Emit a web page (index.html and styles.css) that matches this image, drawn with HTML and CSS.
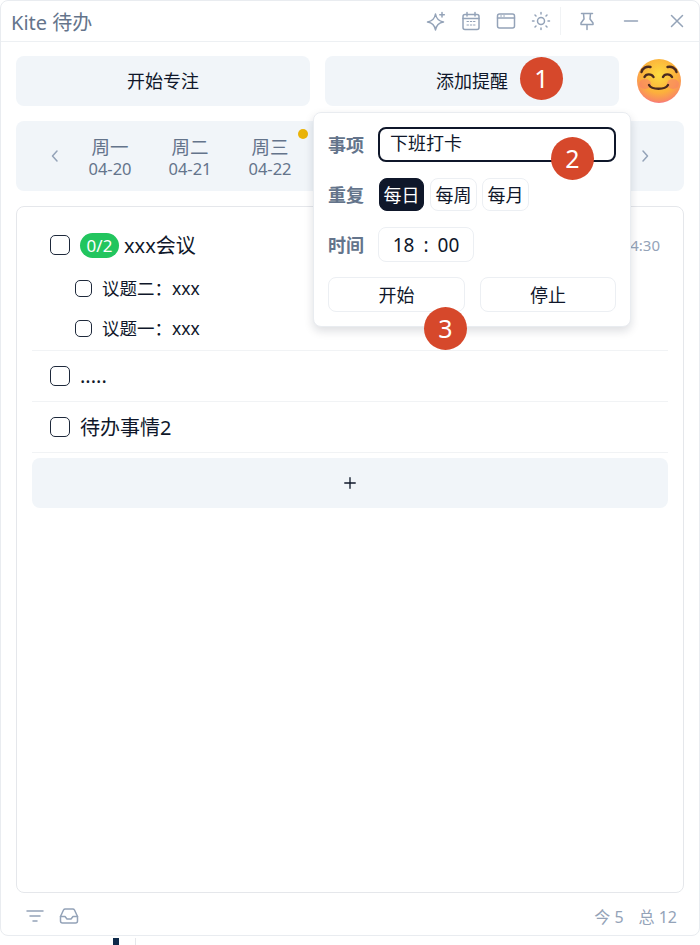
FILE: index.html
```html
<!DOCTYPE html>
<html lang="zh-CN">
<head>
    <meta charset="UTF-8">
    <meta name="viewport" content="width=device-width, initial-scale=1.0">
    <title>Kite 待办</title>
    <link rel="stylesheet" href="styles.css">
</head>
<body>
    <div class="window">
        <header class="titlebar">
            <div class="app-title">Kite 待办</div>
            <div class="tools">
                <button class="tool">
                    <svg viewBox="0 0 20 20"><path d="M9.500 3c.8 4.800 3.200 7.200 8 8-4.800.8-7.200 3.200-8 8-.8-4.800-3.200-7.200-8-8 4.800-.8 7.200-3.200 8-8z"/><path d="M16 1.500v4.500M13.800 3.800h4.500"/></svg>
                </button>
                <button class="tool">
                    <svg viewBox="0 0 20 20"><rect x="2" y="3.500" width="16" height="15" rx="2"/><path d="M2 7.500h16M6 1.500v3.500M14 1.500v3.500"/><path class="fine" d="M6 10.500h1.500M9.300 10.500h1.500M12.500 10.500H14M6 14h1.500M9.300 14h1.500M12.500 14H14"/></svg>
                </button>
                <button class="tool">
                    <svg viewBox="0 0 20 20"><rect x="1.500" y="3" width="17" height="14" rx="2"/><path d="M1.500 7h17M5 5h.1M8 5h.1"/></svg>
                </button>
                <button class="tool">
                    <svg viewBox="0 0 20 20"><circle cx="10" cy="10" r="3.500"/><path d="M10 1.500v1.500M10 17v1.500M1.500 10H3M17 10h1.500M4 4l1 1M15 15l1 1M4 16l1-1M15 5l1-1"/></svg>
                </button>
            </div>
            <div class="tool-sep"></div>
            <button class="win-btn pin-btn">
                <svg viewBox="0 0 20 20"><path d="M4.500 2.500h11M6.500 2.500L7 8l-3 4v1.500h12V12l-3-4 .5-5.500M10 13.500v5"/></svg>
            </button>
            <button class="win-btn">
                <svg viewBox="0 0 20 20"><path d="M3.500 10h13"/></svg>
            </button>
            <button class="win-btn close-btn">
                <svg viewBox="0 0 20 20"><path d="M4.500 4.500l11 11M15.500 4.500l-11 11"/></svg>
            </button>
        </header>

        <main class="content">
            <div class="actions">
                <button class="action-btn">开始专注</button>
                <button class="action-btn">添加提醒</button>
                <svg class="avatar" viewBox="0 0 44 44">
                    <defs>
                        <radialGradient id="face" cx="50%" cy="36%" r="66%">
                            <stop offset="0%" stop-color="#fddc3f"/>
                            <stop offset="62%" stop-color="#fcb03c"/>
                            <stop offset="90%" stop-color="#f98a62"/>
                            <stop offset="100%" stop-color="#f56f8c"/>
                        </radialGradient>
                    </defs>
                    <circle cx="22" cy="22" r="22" fill="url(#face)"/>
                    <ellipse cx="8" cy="25" rx="6" ry="5" fill="#f9806a" opacity=".6"/>
                    <ellipse cx="36" cy="25" rx="6" ry="5" fill="#f9806a" opacity=".6"/>
                    <g fill="none" stroke="#4a2a20" stroke-width="2.400" stroke-linecap="round">
                        <path d="M4.500 13c1-4 5-6 9-5"/>
                        <path d="M39.500 13c-1-4-5-6-9-5"/>
                        <path d="M7.500 18c1.500-3.500 7-3.500 9 0"/>
                        <path d="M26 18c1.500-3.500 7-3.500 9 0"/>
                        <path d="M12 26c3 5 16 5 19 0"/>
                    </g>
                </svg>
                <span class="step step-one">1</span>

                <div class="popover">
                    <div class="form-row">
                        <label class="form-label">事项</label>
                        <div class="text-input">下班打卡</div>
                    </div>
                    <div class="form-row">
                        <label class="form-label">重复</label>
                        <div class="repeat-group">
                            <button class="chip active">每日</button>
                            <button class="chip">每周</button>
                            <button class="chip">每月</button>
                        </div>
                    </div>
                    <div class="form-row time-row">
                        <label class="form-label">时间</label>
                        <div class="time-input"><span>18</span><span>:</span><span>00</span></div>
                    </div>
                    <div class="form-buttons">
                        <button class="plain-btn">开始</button>
                        <button class="plain-btn">停止</button>
                    </div>
                    <span class="step step-two">2</span>
                    <span class="step step-three">3</span>
                </div>
            </div>

            <div class="week">
                <svg class="chevron" viewBox="0 0 12 16"><path d="M8 3L3.500 8 8 13"/></svg>
                <div class="days">
                    <div class="day"><span class="day-name">周一</span><span class="day-date">04-20</span></div>
                    <div class="day"><span class="day-name">周二</span><span class="day-date">04-21</span></div>
                    <div class="day"><span class="day-name">周三</span><span class="day-date">04-22</span></div>
                    <div class="day"><span class="dot"></span></div>
                </div>
                <svg class="chevron" viewBox="0 0 12 16"><path d="M4 3l4.500 5L4 13"/></svg>
            </div>

            <section class="list">
                <div class="todo">
                    <div class="todo-main">
                        <span class="check"></span>
                        <span class="badge">0/2</span>
                        <span class="todo-text">xxx会议</span>
                        <span class="todo-time">14:30</span>
                    </div>
                    <div class="sub-item"><span class="check small"></span><span>议题二：xxx</span></div>
                    <div class="sub-item"><span class="check small"></span><span>议题一：xxx</span></div>
                </div>
                <div class="todo">
                    <div class="todo-main"><span class="check"></span><span class="todo-text">.....</span></div>
                </div>
                <div class="todo">
                    <div class="todo-main"><span class="check"></span><span class="todo-text">待办事情2</span></div>
                </div>
                <button class="add-btn">
                    <svg viewBox="0 0 16 16"><path d="M8 2v12M2 8h12"/></svg>
                </button>
            </section>
        </main>

        <footer class="statusbar">
            <div class="status-icons">
                <svg viewBox="0 0 20 20"><path d="M2 5h16M5 10h10M8 15h4"/></svg>
                <svg viewBox="0 0 20 20"><path d="M1.500 10.500V15a2 2 0 0 0 2 2h13a2 2 0 0 0 2-2v-4.500L15.500 4a2 2 0 0 0-1.800-1H6.300a2 2 0 0 0-1.800 1z"/><path d="M1.500 10.500h4.500l2 2.500h4l2-2.500h4.500"/></svg>
            </div>
            <div class="counts"><span>今 5</span><span>总 12</span></div>
        </footer>
    </div>
    <div class="leftover"><span class="mark-dark"></span><span class="mark-line"></span></div>
</body>
</html>
```

FILE: styles.css
```css
* {
    box-sizing: border-box;
}

body {
    margin: 0;
    background-color: #fff;
    color: #0f172a;
    font-family: "Noto Sans", "Noto Sans CJK SC", sans-serif;
    overflow: hidden;
}

button {
    font: inherit;
    color: inherit;
    border: 0;
    background: none;
    padding: 0;
}

svg {
    display: block;
    fill: none;
    stroke-linecap: round;
    stroke-linejoin: round;
}

.window {
    width: 700px;
    height: 936px;
    display: flex;
    flex-direction: column;
    border: 1px solid #e9ecf0;
    border-radius: 8px;
    overflow: hidden;
}

/* title bar */
.titlebar {
    height: 41px;
    flex: none;
    display: flex;
    align-items: center;
    padding-left: 10px;
    border-bottom: 1px solid #edf0f3;
}

.app-title {
    font-size: 20px;
    color: #64748b;
    margin-right: auto;
}

.tools {
    display: flex;
}

.tool {
    width: 35px;
    height: 40px;
    display: flex;
    align-items: center;
    justify-content: center;
}

.tool svg {
    width: 20px;
    height: 20px;
    stroke: #94a3b8;
    stroke-width: 1.5;
}

.tool svg .fine {
    stroke-width: 1;
}

.tool-sep {
    width: 1px;
    height: 28px;
    background-color: #f1f3f5;
    margin: 0 3px 0 2px;
}

.win-btn {
    width: 46px;
    height: 40px;
    flex: none;
    display: flex;
    align-items: center;
    justify-content: center;
}

.pin-btn {
    margin-right: -2px;
}

.close-btn {
    margin-right: -1px;
}

.win-btn svg {
    width: 20px;
    height: 20px;
    stroke: #94a3b8;
    stroke-width: 1.5;
}

/* main area */
.content {
    flex: 1;
    min-height: 0;
    display: flex;
    flex-direction: column;
    padding: 14px 15px 0;
}

.actions {
    position: relative;
    display: flex;
    height: 50px;
    flex: none;
}

.action-btn {
    width: 294px;
    margin-right: 15px;
    padding-bottom: 2px;
    border-radius: 8px;
    background-color: #f1f5f9;
    font-size: 18px;
}

.action-btn + .action-btn {
    margin-right: 18px;
}

.avatar {
    width: 44px;
    height: 44px;
    margin-top: 3px;
}

.step {
    position: absolute;
    width: 43px;
    height: 43px;
    border-radius: 50%;
    background-color: #d6482b;
    color: #fff;
    font-size: 25px;
    line-height: 43px;
    text-align: center;
    z-index: 3;
}

.step-one {
    left: 504px;
    top: 1px;
}

.step-two {
    left: 237px;
    top: 24px;
}

.step-three {
    left: 110px;
    top: 194px;
}

/* reminder popover */
.popover {
    position: absolute;
    left: 297px;
    top: 56px;
    width: 318px;
    height: 215px;
    padding: 14px;
    display: flex;
    flex-direction: column;
    background-color: #fff;
    border: 1px solid #e9ecf0;
    border-radius: 8px;
    box-shadow: 0 4px 10px rgba(15, 23, 42, 0.14);
    z-index: 2;
}

.form-row {
    display: flex;
    align-items: center;
    margin-bottom: 16px;
}

.time-row {
    margin-bottom: 15px;
}

.form-label {
    width: 50px;
    flex: none;
    padding-bottom: 2px;
    font-size: 18px;
    font-weight: 700;
    color: #64748b;
}

.text-input {
    width: 238px;
    height: 35px;
    padding-left: 10px;
    border: 2px solid #0f172a;
    border-radius: 8px;
    font-size: 18px;
    line-height: 28px;
}

.repeat-group {
    display: flex;
    gap: 5px;
}

.chip {
    height: 33px;
    width: 47px;
    padding-bottom: 2px;
    border: 1px solid #eceff3;
    border-radius: 8px;
    font-size: 18px;
}

.chip.active {
    width: 45px;
    margin: 0 1px;
    background-color: #0f172a;
    border-color: #0f172a;
    color: #fff;
}

.time-input {
    width: 96px;
    height: 35px;
    display: flex;
    align-items: center;
    justify-content: center;
    gap: 9px;
    border: 1px solid #eceff3;
    border-radius: 8px;
    font-size: 19px;
}

.form-buttons {
    display: flex;
    justify-content: space-between;
}

.plain-btn {
    width: 137px;
    height: 35px;
    padding-bottom: 2px;
    border: 1px solid #eceff3;
    border-radius: 8px;
    font-size: 18px;
}

.plain-btn + .plain-btn {
    width: 136px;
}

/* week strip */
.week {
    flex: none;
    height: 70px;
    margin-top: 15px;
    display: flex;
    align-items: center;
    padding: 0 33px;
    background-color: #f1f5f9;
    border-radius: 8px;
}

.chevron {
    width: 12px;
    height: 16px;
    flex: none;
    stroke: #94a3b8;
    stroke-width: 1.5;
}

.days {
    flex: 1;
    display: flex;
    padding-left: 9px;
}

.day {
    position: relative;
    width: 80px;
    display: flex;
    flex-direction: column;
    align-items: center;
    color: #64748b;
}

.day-name {
    font-size: 18.5px;
    line-height: 25px;
}

.day-date {
    font-size: 16.5px;
    line-height: 20px;
}

.dot {
    position: absolute;
    left: -12px;
    top: -5px;
    width: 10px;
    height: 10px;
    border-radius: 50%;
    background-color: #eab308;
}

/* todo list */
.list {
    flex: 1;
    min-height: 0;
    margin-top: 15px;
    padding: 0 15px;
    border: 1px solid #e5e7eb;
    border-radius: 8px;
}

.todo {
    padding: 0 18px;
    border-bottom: 1px solid #f1f3f5;
}

.todo:first-child {
    padding-top: 13px;
    padding-bottom: 2px;
}

.todo-main {
    height: 50px;
    display: flex;
    align-items: center;
}

.check {
    flex: none;
    width: 20px;
    height: 20px;
    margin-right: 10px;
    border: 1.5px solid #1e293b;
    border-radius: 5px;
}

.check.small {
    width: 17px;
    height: 17px;
}

.badge {
    width: 39px;
    height: 25px;
    margin-right: 5px;
    border-radius: 13px;
    background-color: #22c55e;
    color: #fff;
    font-size: 17px;
    line-height: 25px;
    text-align: center;
}

.todo-text {
    padding-bottom: 2px;
    font-size: 20px;
}

.todo-time {
    margin-left: auto;
    margin-right: -10px;
    font-size: 15px;
    color: #94a3b8;
}

.sub-item {
    height: 40px;
    display: flex;
    align-items: center;
    padding-left: 25px;
    font-size: 17.5px;
}

.todo-main + .sub-item {
    margin-top: -2px;
}

.sub-item span:last-child {
    padding-bottom: 2px;
}

.add-btn {
    width: 100%;
    height: 50px;
    margin-top: 5px;
    display: flex;
    align-items: center;
    justify-content: center;
    border-radius: 8px;
    background-color: #f1f5f9;
}

.add-btn svg {
    width: 14px;
    height: 14px;
    stroke: #0f172a;
    stroke-width: 1.5;
}

/* status bar */
.statusbar {
    flex: none;
    height: 42px;
    display: flex;
    align-items: center;
    justify-content: space-between;
    padding: 3px 22px 0 24px;
    font-size: 16px;
    color: #94a3b8;
}

.status-icons {
    display: flex;
    gap: 14px;
}

.status-icons svg {
    width: 20px;
    height: 20px;
    stroke: #94a3b8;
    stroke-width: 1.5;
}

.counts {
    display: flex;
    gap: 15px;
}

/* bits of another window showing under this one */
.leftover {
    display: flex;
    height: 9px;
    padding: 2px 0 0 113px;
}

.mark-dark {
    width: 6px;
    background-color: #0f2a4a;
}

.mark-line {
    width: 1px;
    margin-left: 16px;
    background-color: #e5e7eb;
}
```
